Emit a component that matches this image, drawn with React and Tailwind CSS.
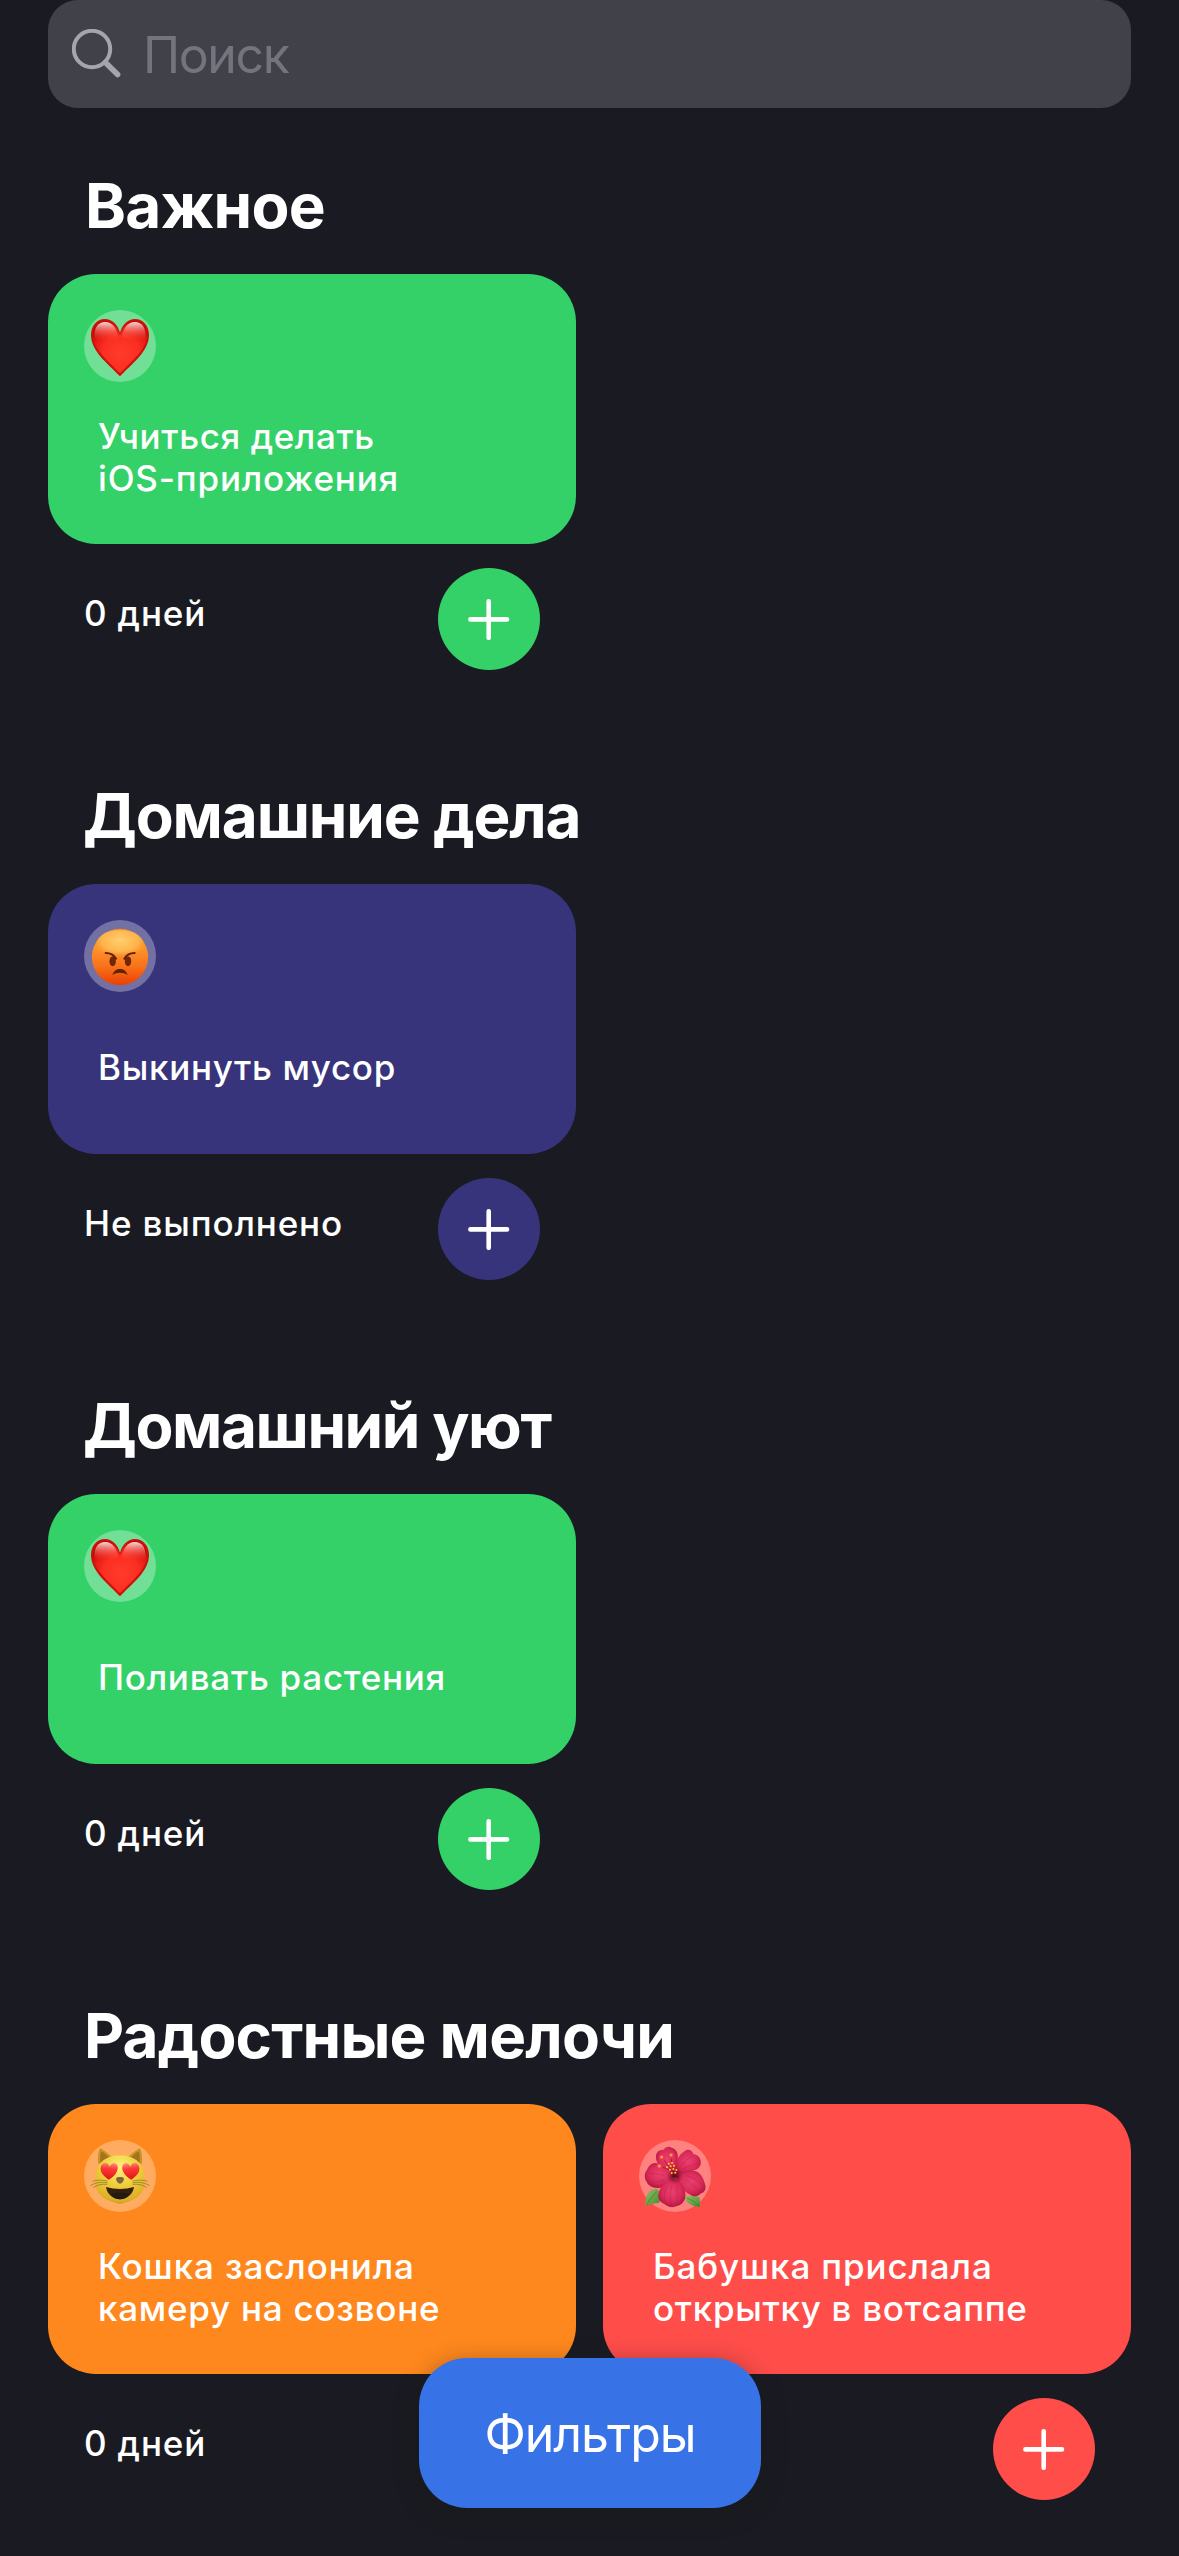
function HeartEmoji() {
  return (
    <svg viewBox="42 30 216 216" className="size-[72px] overflow-visible">
      <defs>
        <radialGradient id="heartBody" cx="0.52" cy="0.62" r="0.62">
          <stop offset="0" stopColor="#ff3b2c" />
          <stop offset="0.55" stopColor="#fb2e22" />
          <stop offset="0.85" stopColor="#e01a12" />
          <stop offset="1" stopColor="#c00a04" />
        </radialGradient>
        <linearGradient id="heartShine" x1="0" y1="0" x2="0" y2="1">
          <stop offset="0" stopColor="#fff" stopOpacity="0.85" />
          <stop offset="0.45" stopColor="#ff9a92" stopOpacity="0.55" />
          <stop offset="1" stopColor="#ff4a3c" stopOpacity="0" />
        </linearGradient>
      </defs>
      <path
        d="M150 98C143 73 126 57 105 57C80 57 63 78 63 105C63 154 113 190 150 229C187 190 237 154 237 105C237 78 220 57 195 57C174 57 157 73 150 98Z"
        fill="#cf100a"
      />
      <path
        d="M150 106C143 79 126 63 106 63C83 63 69 81 69 105C69 148 114 182 150 220C186 182 231 148 231 105C231 81 217 63 194 63C174 63 157 79 150 106Z"
        fill="url(#heartBody)"
      />
      <path d="M73 116C71 82 85 66 106 66C126 66 139 82 145 112C122 122 92 122 73 116Z" fill="url(#heartShine)" />
      <path d="M227 116C229 82 215 66 194 66C174 66 161 82 155 112C178 122 208 122 227 116Z" fill="url(#heartShine)" />
    </svg>
  );
}

function AngryEmoji() {
  return (
    <svg viewBox="42 30 216 216" className="size-[72px] overflow-visible">
      <defs>
        <linearGradient id="angryBody" x1="0" y1="0" x2="0" y2="1">
          <stop offset="0" stopColor="#f98a2b" />
          <stop offset="0.35" stopColor="#fd932a" />
          <stop offset="0.65" stopColor="#f9741b" />
          <stop offset="1" stopColor="#e93f05" />
        </linearGradient>
        <radialGradient id="angryGlow" cx="0.5" cy="0.35" r="0.6">
          <stop offset="0" stopColor="#ffd071" />
          <stop offset="0.65" stopColor="#ffc057" stopOpacity="0.75" />
          <stop offset="1" stopColor="#ff9d2e" stopOpacity="0" />
        </radialGradient>
      </defs>
      <circle cx="150" cy="141" r="84.5" fill="url(#angryBody)" />
      <ellipse cx="150" cy="104" rx="72" ry="44" fill="url(#angryGlow)" />
      <ellipse cx="128" cy="154" rx="9.5" ry="14.5" fill="#71260a" />
      <ellipse cx="174" cy="154" rx="9.5" ry="14.5" fill="#71260a" />
      <path d="M107 129C120 129 131 134 138 146" fill="none" stroke="#5f2208" strokeWidth="6" strokeLinecap="round" />
      <path d="M194 129C181 129 170 134 163 146" fill="none" stroke="#5f2208" strokeWidth="6" strokeLinecap="round" />
      <path
        d="M127 195C132 182 140 177 150 177C160 177 168 182 173 195C166 190 159 188 150 188C141 188 134 190 127 195Z"
        fill="#5f2208"
      />
    </svg>
  );
}

function CatEmoji() {
  return (
    <svg viewBox="42 30 216 216" className="size-[72px] overflow-visible">
      <defs>
        <radialGradient id="catFace" cx="0.5" cy="0.25" r="0.8">
          <stop offset="0" stopColor="#fff27c" />
          <stop offset="0.45" stopColor="#f0d03c" />
          <stop offset="0.85" stopColor="#dcb027" />
          <stop offset="1" stopColor="#c08c17" />
        </radialGradient>
        <linearGradient id="catEye" x1="0" y1="0" x2="0" y2="1">
          <stop offset="0" stopColor="#ff8a80" />
          <stop offset="0.35" stopColor="#fb3b35" />
          <stop offset="1" stopColor="#e01518" />
        </linearGradient>
      </defs>
      <path d="M84 102C83 80 85 60 91 54C104 62 119 73 130 86Z" fill="#c4962a" />
      <path d="M216 102C217 80 215 60 209 54C196 62 181 73 170 86Z" fill="#c4962a" />
      <path d="M91 98C90 82 91 70 94 64C104 70 113 78 121 87Z" fill="#a8701f" />
      <path d="M209 98C210 82 209 70 206 64C196 70 187 78 179 87Z" fill="#a8701f" />
      <path
        d="M150 76C106 76 80 100 77 138C72 164 78 184 97 200C115 213 134 217 150 222C166 217 185 213 203 200C222 184 228 164 223 138C220 100 194 76 150 76Z"
        fill="url(#catFace)"
      />
      <path
        d="M119 149C101 139 91 130 91 117C91 105 99 99 107 101C112 102 115 106 117 110C120 102 126 96 134 99C142 102 144 112 140 123C136 134 128 143 119 149Z"
        transform="rotate(7 117 124)"
        fill="url(#catEye)"
      />
      <path
        d="M181 149C199 139 209 130 209 117C209 105 201 99 193 101C188 102 185 106 183 110C180 102 174 96 166 99C158 102 156 112 160 123C164 134 172 143 181 149Z"
        transform="rotate(-7 183 124)"
        fill="url(#catEye)"
      />
      <path d="M138 147C138 142 145 141 150 141C155 141 162 142 162 147C162 153 155 161 150 161C145 161 138 153 138 147Z" fill="#80643b" />
      <path d="M108 171C135 179 165 179 192 171C189 192 171 208 150 208C129 208 111 192 108 171Z" fill="#35210e" />
      <path d="M122 192C138 187 162 187 178 192C170 203 160 208 150 208C140 208 130 203 122 192Z" fill="#241a12" />
      <g fill="none" stroke="#8a6a2e" strokeWidth="2">
        <path d="M112 153C92 149 78 150 68 154" />
        <path d="M112 158C90 155 74 159 61 167" />
        <path d="M112 163C95 161 80 165 70 173" />
        <path d="M188 153C208 149 222 150 232 154" />
        <path d="M188 158C210 155 226 159 239 167" />
        <path d="M188 163C205 161 220 165 230 173" />
      </g>
    </svg>
  );
}

function HibiscusEmoji() {
  return (
    <svg viewBox="42 30 216 216" className="size-[72px] overflow-visible">
      <defs>
        <radialGradient id="petal" cx="0.5" cy="0.45" r="0.6">
          <stop offset="0" stopColor="#ea4070" />
          <stop offset="0.6" stopColor="#d92b59" />
          <stop offset="1" stopColor="#a9143a" />
        </radialGradient>
        <linearGradient id="leaf" x1="0" y1="0" x2="1" y2="1">
          <stop offset="0" stopColor="#8cc060" />
          <stop offset="1" stopColor="#4a8a30" />
        </linearGradient>
        <radialGradient id="flowerCore">
          <stop offset="0" stopColor="#4a0312" />
          <stop offset="1" stopColor="#8d0f30" stopOpacity="0" />
        </radialGradient>
      </defs>
      <path d="M62 229C60 200 66 178 96 176C108 190 108 208 102 219C88 220 74 222 62 229Z" fill="url(#leaf)" />
      <path d="M64 226C72 210 84 196 96 184" fill="none" stroke="#3b7d2a" strokeWidth="2" />
      <path d="M180 200C198 196 222 196 224 206C227 216 225 224 224 231C206 230 188 222 180 206Z" fill="url(#leaf)" />
      <path d="M186 204C200 210 212 218 223 229" fill="none" stroke="#3b7d2a" strokeWidth="2" />
      <path
        d="M146 136C118 124 90 104 93 78C94 63 106 59 116 59C121 51 132 47 140 53C150 56 158 64 158 76C160 98 156 120 146 136Z"
        fill="url(#petal)"
      />
      <path
        d="M150 136C148 104 158 74 180 63C190 55 202 62 206 73C220 74 230 88 227 102C225 112 216 120 204 122C184 124 166 126 150 136Z"
        fill="url(#petal)"
      />
      <path
        d="M148 140C136 122 116 104 92 99C78 98 70 110 66 120C58 128 57 144 64 154C70 170 88 176 106 173C126 170 140 158 148 140Z"
        fill="url(#petal)"
      />
      <path
        d="M152 138C172 118 200 120 218 126C230 134 236 148 240 162C245 176 238 188 228 190C220 200 206 202 196 194C174 184 160 162 152 138Z"
        fill="url(#petal)"
      />
      <path
        d="M150 146C128 152 104 168 101 190C96 204 106 218 118 222C128 232 144 234 156 228C170 226 182 212 181 196C182 176 170 156 150 146Z"
        fill="url(#petal)"
      />
      <g fill="none" stroke="#b51c46" strokeWidth="1.6" opacity="0.7">
        <path d="M124 172C118 188 116 202 120 216" />
        <path d="M140 166C136 186 134 206 138 224" />
        <path d="M154 168C158 188 158 206 154 222" />
        <path d="M120 150C104 156 88 158 74 154" />
        <path d="M116 136C100 132 86 130 72 130" />
        <path d="M180 148C196 158 210 170 222 184" />
        <path d="M186 138C202 142 218 150 232 164" />
        <path d="M166 112C176 98 188 86 202 78" />
        <path d="M172 118C188 110 202 104 220 100" />
      </g>
      <circle cx="149" cy="138" r="24" fill="url(#flowerCore)" />
      <g fill="none" stroke="#b0123a" strokeWidth="3">
        <path d="M148 132C136 114 124 98 111 84" />
        <path d="M146 128C140 110 138 94 139 78" />
        <path d="M144 128C130 116 116 112 104 111" />
      </g>
      <g fill="#ff8d88">
        <circle cx="111" cy="83" r="9.5" fill="#e73a45" />
        <circle cx="139" cy="77" r="9.5" fill="#e73a45" />
        <circle cx="104" cy="110" r="9.5" fill="#e73a45" />
        <circle cx="110" cy="81" r="4.5" />
        <circle cx="138" cy="75" r="4.5" />
        <circle cx="103" cy="108" r="4.5" />
      </g>
      <g fill="#fbd41c">
        <circle cx="131" cy="101" r="3" />
        <circle cx="141" cy="99" r="3" />
        <circle cx="126" cy="112" r="3" />
        <circle cx="137" cy="109" r="3" />
        <circle cx="147" cy="107" r="3" />
        <circle cx="135" cy="119" r="3" />
        <circle cx="145" cy="117" r="3" />
        <circle cx="154" cy="120" r="3" />
        <circle cx="140" cy="129" r="3" />
        <circle cx="151" cy="128" r="3" />
      </g>
    </svg>
  );
}

function TrackerCard({ color, emoji, title, days }) {
  return (
    <div className="w-[528px]">
      <div className={`h-[270px] rounded-[48px] pt-9 ${color}`}>
        <div className="ml-9 size-[72px] rounded-full bg-white/30">{emoji}</div>
        <div className="mt-[33px] flex h-[84px] flex-col justify-center pl-[50px] text-[35px] leading-[42px] font-medium">
          {title.map(([line, tracking]) => (
            <span key={line} className={`whitespace-nowrap ${tracking}`}>{line}</span>
          ))}
        </div>
      </div>
      <div className="mt-6 flex items-start justify-between pr-9 pl-9">
        <span className="mt-6 text-[35px] leading-[42px] font-medium tracking-[0.85px]">{days}</span>
        <button className={`flex size-[102px] items-center justify-center rounded-full ${color}`}>
          <svg viewBox="0 0 42 42" className="size-[42px]" fill="none" stroke="#fff" strokeWidth="4.6" strokeLinecap="round">
            <path d="M20.7 3.2V39.8M2.4 21.4H39" />
          </svg>
        </button>
      </div>
    </div>
  );
}

const sections = [
  {
    name: "Важное",
    tracking: "pl-[37px] tracking-[-0.68px]",
    cards: [
      {
        color: "bg-[#34d169]",
        emoji: <HeartEmoji />,
        title: [["Учиться делать", "tracking-[0.6px]"], ["iOS-приложения", "tracking-[0.83px]"]],
        days: "0 дней",
      },
    ],
  },
  {
    name: "Домашние дела",
    tracking: "pl-[35px] tracking-[-1.13px]",
    cards: [
      {
        color: "bg-[#37347c]",
        emoji: <AngryEmoji />,
        title: [["Выкинуть мусор", "tracking-[0.7px]"]],
        days: "Не выполнено",
      },
    ],
  },
  {
    name: "Домашний уют",
    tracking: "pl-[35px] tracking-[-1.42px]",
    cards: [
      {
        color: "bg-[#34d169]",
        emoji: <HeartEmoji />,
        title: [["Поливать растения", "tracking-[0.73px]"]],
        days: "0 дней",
      },
    ],
  },
  {
    name: "Радостные мелочи",
    tracking: "pl-[36px] tracking-[-0.8px]",
    cards: [
      {
        color: "bg-[#ff881e]",
        emoji: <CatEmoji />,
        title: [["Кошка заслонила", "tracking-[0.89px]"], ["камеру на созвоне", "tracking-[0.75px]"]],
        days: "0 дней",
      },
      {
        color: "bg-[#ff4d4a]",
        emoji: <HibiscusEmoji />,
        title: [["Бабушка прислала", "tracking-[0.86px]"], ["открытку в вотсаппе", "tracking-[0.69px]"]],
        days: "",
      },
    ],
  },
];

export default function App() {
  return (
    <div className="relative h-[2556px] w-[1179px] overflow-hidden bg-[#1a1b22] px-12 font-['Inter',sans-serif] text-white">
      <div className="flex h-[108px] items-center rounded-[30px] bg-[#41414a] pl-6">
        <svg viewBox="0 0 50 50" className="size-[50px]" fill="none" stroke="#a6a5af" strokeLinecap="round">
          <circle cx="20" cy="20" r="18.2" strokeWidth="4" />
          <path d="M33.4 33.4L45.6 45.6" strokeWidth="5.6" />
        </svg>
        <span className="ml-[21px] pt-[2px] text-[50px] leading-[60px] tracking-[-1.4px] text-[#74747e]">Поиск</span>
      </div>

      <main className="pt-[61px]">
        {sections.map((section) => (
          <section key={section.name} className="h-[610px]">
            <h2 className={`text-[62px] leading-[73px] font-bold ${section.tracking}`}>{section.name}</h2>
            <div className="mt-8 flex gap-[27px]">
              {section.cards.map((card) => (
                <TrackerCard key={card.title[0][0]} {...card} />
              ))}
            </div>
          </section>
        ))}
      </main>

      <button className="absolute bottom-12 left-[419px] flex h-[150px] w-[342px] items-center justify-center rounded-[48px] bg-[#3772e7] pt-[2px] text-[50px] tracking-[-1px] shadow-[0_6px_24px_rgba(22,24,22,0.45)]">
        Фильтры
      </button>
    </div>
  );
}
